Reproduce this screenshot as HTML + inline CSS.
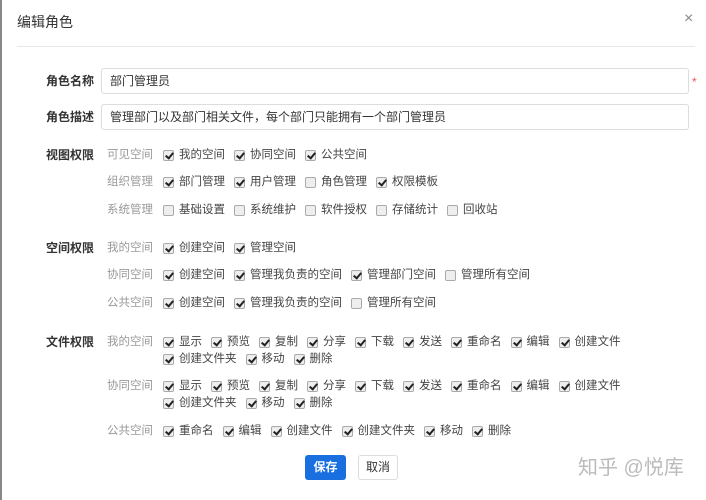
<!DOCTYPE html>
<html><head><meta charset="utf-8"><style>
*{margin:0;padding:0;box-sizing:border-box}
body{width:706px;height:500px;background:#fff;position:relative;overflow:hidden;font-family:"Liberation Sans","Noto Sans CJK SC",sans-serif;font-size:12px;color:#333}
.edge{position:absolute;left:0;top:0;width:2px;height:500px;background:#888}
.a{position:absolute;white-space:nowrap;line-height:16px}
.lb{font-weight:bold;color:#333;left:46px}
.sub{left:107px;color:#999;font-size:11.5px}
.row{position:absolute;left:163px;width:475px;display:flex;flex-wrap:wrap;row-gap:1px;line-height:16px;font-size:11.5px}
.it{display:flex;align-items:center;margin-right:9px;color:#444;white-space:nowrap}
.cb{width:11px;height:11px;border:1px solid #aaa;border-radius:2px;background:#eee;margin-right:5px;position:relative;flex:none}
.cb.c::after{content:"";position:absolute;left:3px;top:0px;width:3px;height:6px;border:solid #222;border-width:0 2px 2px 0;transform:rotate(40deg)}
.inp{position:absolute;left:101px;width:588px;border:1px solid #ddd;border-radius:3px;padding-left:8px;line-height:24px;height:26px;color:#333}
</style></head><body>
<div class="edge"></div>
<div class="a" style="left:17px;top:14px;font-size:14px;color:#333">编辑角色</div>
<div class="a" style="left:684px;top:11px;font-size:16px;color:#888">×</div>
<div style="position:absolute;left:17px;top:46px;width:678px;height:1px;background:#e8e8e8"></div>

<div class="a lb" style="top:73px">角色名称</div>
<div class="inp" style="top:68px">部门管理员</div>
<div class="a" style="left:692px;top:74px;color:#e55">*</div>
<div class="a lb" style="top:109px">角色描述</div>
<div class="inp" style="top:104px">管理部门以及部门相关文件，每个部门只能拥有一个部门管理员</div>

<div class="a lb" style="top:147px">视图权限</div>
<div class="a sub" style="top:147px">可见空间</div>
<div class="row" style="top:147px"><span class="it"><i class="cb c"></i>我的空间</span><span class="it"><i class="cb c"></i>协同空间</span><span class="it"><i class="cb c"></i>公共空间</span></div>
<div class="a sub" style="top:174px">组织管理</div>
<div class="row" style="top:174px"><span class="it"><i class="cb c"></i>部门管理</span><span class="it"><i class="cb c"></i>用户管理</span><span class="it"><i class="cb"></i>角色管理</span><span class="it"><i class="cb c"></i>权限模板</span></div>
<div class="a sub" style="top:202px">系统管理</div>
<div class="row" style="top:202px"><span class="it"><i class="cb"></i>基础设置</span><span class="it"><i class="cb"></i>系统维护</span><span class="it"><i class="cb"></i>软件授权</span><span class="it"><i class="cb"></i>存储统计</span><span class="it"><i class="cb"></i>回收站</span></div>

<div class="a lb" style="top:240px">空间权限</div>
<div class="a sub" style="top:240px">我的空间</div>
<div class="row" style="top:240px"><span class="it"><i class="cb c"></i>创建空间</span><span class="it"><i class="cb c"></i>管理空间</span></div>
<div class="a sub" style="top:267px">协同空间</div>
<div class="row" style="top:267px"><span class="it"><i class="cb c"></i>创建空间</span><span class="it"><i class="cb c"></i>管理我负责的空间</span><span class="it"><i class="cb c"></i>管理部门空间</span><span class="it"><i class="cb"></i>管理所有空间</span></div>
<div class="a sub" style="top:295px">公共空间</div>
<div class="row" style="top:295px"><span class="it"><i class="cb c"></i>创建空间</span><span class="it"><i class="cb c"></i>管理我负责的空间</span><span class="it"><i class="cb"></i>管理所有空间</span></div>

<div class="a lb" style="top:334px">文件权限</div>
<div class="a sub" style="top:334px">我的空间</div>
<div class="row" style="top:334px"><span class="it"><i class="cb c"></i>显示</span><span class="it"><i class="cb c"></i>预览</span><span class="it"><i class="cb c"></i>复制</span><span class="it"><i class="cb c"></i>分享</span><span class="it"><i class="cb c"></i>下载</span><span class="it"><i class="cb c"></i>发送</span><span class="it"><i class="cb c"></i>重命名</span><span class="it"><i class="cb c"></i>编辑</span><span class="it"><i class="cb c"></i>创建文件</span><span class="it"><i class="cb c"></i>创建文件夹</span><span class="it"><i class="cb c"></i>移动</span><span class="it"><i class="cb c"></i>删除</span></div>
<div class="a sub" style="top:378px">协同空间</div>
<div class="row" style="top:378px"><span class="it"><i class="cb c"></i>显示</span><span class="it"><i class="cb c"></i>预览</span><span class="it"><i class="cb c"></i>复制</span><span class="it"><i class="cb c"></i>分享</span><span class="it"><i class="cb c"></i>下载</span><span class="it"><i class="cb c"></i>发送</span><span class="it"><i class="cb c"></i>重命名</span><span class="it"><i class="cb c"></i>编辑</span><span class="it"><i class="cb c"></i>创建文件</span><span class="it"><i class="cb c"></i>创建文件夹</span><span class="it"><i class="cb c"></i>移动</span><span class="it"><i class="cb c"></i>删除</span></div>
<div class="a sub" style="top:423px">公共空间</div>
<div class="row" style="top:423px"><span class="it"><i class="cb c"></i>重命名</span><span class="it"><i class="cb c"></i>编辑</span><span class="it"><i class="cb c"></i>创建文件</span><span class="it"><i class="cb c"></i>创建文件夹</span><span class="it"><i class="cb c"></i>移动</span><span class="it"><i class="cb c"></i>删除</span></div>

<div class="a" style="left:305px;top:455px;width:41px;height:25px;background:#1a6fe0;border-radius:3px;color:#fff;font-weight:bold;text-align:center;line-height:25px">保存</div>
<div class="a" style="left:358px;top:455px;width:40px;height:25px;border:1px solid #ddd;border-radius:3px;color:#333;text-align:center;line-height:23px">取消</div>
<div class="a" style="left:578px;top:456px;font-size:20px;line-height:24px;color:#bbb">知乎 @悦库</div>
</body></html>
